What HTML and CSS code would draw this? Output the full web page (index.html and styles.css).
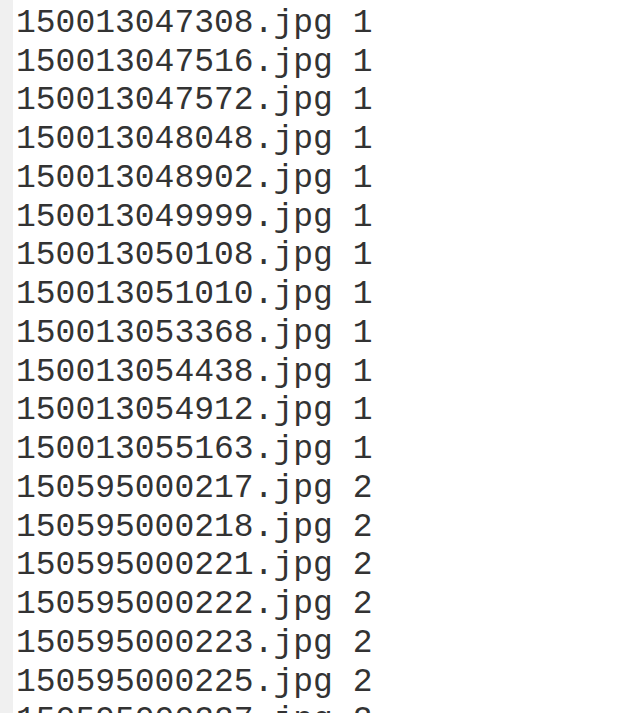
FILE: index.html
```html
<!DOCTYPE html>
<html>
<head>
<meta charset="utf-8">
<link rel="stylesheet" href="styles.css">
</head>
<body>
<div class="editor">
  <div class="gutter"></div>
  <div class="text">
    <div class="line">150013047291.jpg 1</div>
    <div class="line">150013047308.jpg 1</div>
    <div class="line">150013047516.jpg 1</div>
    <div class="line">150013047572.jpg 1</div>
    <div class="line">150013048048.jpg 1</div>
    <div class="line">150013048902.jpg 1</div>
    <div class="line">150013049999.jpg 1</div>
    <div class="line">150013050108.jpg 1</div>
    <div class="line">150013051010.jpg 1</div>
    <div class="line">150013053368.jpg 1</div>
    <div class="line">150013054438.jpg 1</div>
    <div class="line">150013054912.jpg 1</div>
    <div class="line">150013055163.jpg 1</div>
    <div class="line">150595000217.jpg 2</div>
    <div class="line">150595000218.jpg 2</div>
    <div class="line">150595000221.jpg 2</div>
    <div class="line">150595000222.jpg 2</div>
    <div class="line">150595000223.jpg 2</div>
    <div class="line">150595000225.jpg 2</div>
    <div class="line">150595000227.jpg 2</div>
  </div>
</div>
</body>
</html>
```
FILE: styles.css
```css
html, body {
  margin: 0;
  padding: 0;
  background: #ffffff;
  overflow: hidden;
}
.editor {
  display: flex;
  height: 713px;
  overflow: hidden;
}
.gutter {
  width: 13px;
  flex: none;
  background: #f0f0f0;
}
.text {
  flex: 1;
  padding-left: 3px;
  margin-top: -34px;
  font-family: "Liberation Mono", "Courier New", monospace;
  font-size: 33px;
  line-height: 38.75px;
  color: #333333;
}
.line {
  white-space: pre;
}
```
